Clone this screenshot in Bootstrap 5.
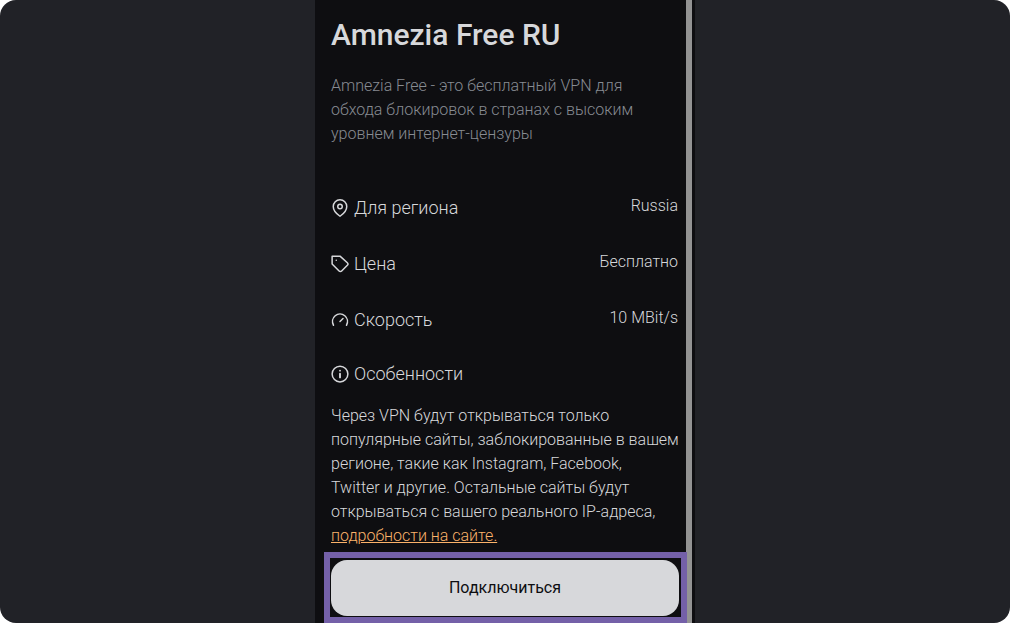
<!DOCTYPE html>
<html lang="ru">
<head>
<meta charset="utf-8">
<meta name="viewport" content="width=device-width, initial-scale=1">
<title>Amnezia Free RU</title>
<link href="https://cdn.jsdelivr.net/npm/bootstrap@5.3.0/dist/css/bootstrap.min.css" rel="stylesheet">
<style>
  body { background: #fff; font-family: Roboto, "Noto Sans", sans-serif; font-size: 16px; line-height: 24px; font-weight: 300; color: #d7d8db; }
  .stage { background: #212227; border-radius: 16px; overflow: hidden; }
  .phone { width: 380px; max-width: 100%; background: #0e0e11; }
  .screen { min-width: 0; }
  .track { width: 6px; margin-right: 3px; background: #939393; }
  h1 { font-size: 30px; line-height: 38px; font-weight: 500; color: #d7d8db; }
  .intro { color: #878b91; }
  .feature { font-size: 18px; line-height: 24px; gap: 5px; padding-top: 2px; }
  .feature-heading { padding: 0 0 2px; }
  .feature svg { width: 18px; height: 18px; fill: none; stroke: #d7d8db; stroke-width: 2; stroke-linecap: round; stroke-linejoin: round; }
  .rows { gap: 30px; }
  .site-link, .site-link:hover { color: #fbb26a; }
  .highlight { border: 6px solid #7460a8; margin: 4px -1px 0 9px; padding: 2px 2px 1px 1px; z-index: 1; }
  .btn-connect { --bs-btn-bg: #d7d8db; --bs-btn-color: #0e0e11; --bs-btn-hover-bg: #c1c2c5; --bs-btn-hover-color: #0e0e11; --bs-btn-border-width: 0; --bs-btn-font-weight: 400; --bs-btn-line-height: 24px; --bs-btn-border-radius: 16px; --bs-btn-padding-y: 16px; }
</style>
</head>
<body>
<div class="stage min-vh-100 d-flex justify-content-center">
  <main class="phone d-flex">
    <div class="screen flex-grow-1 d-flex flex-column">
      <div class="ps-3 pe-2 pt-3">
        <h1 class="mb-0">Amnezia Free RU</h1>
        <p class="intro mt-3 mb-5 pt-1">Amnezia Free - это бесплатный VPN для<br>обхода блокировок в странах с высоким<br>уровнем интернет-цензуры</p>
        <div class="rows d-flex flex-column">
          <div class="d-flex justify-content-between">
            <div class="feature d-flex align-items-center">
              <svg viewBox="0 0 24 24" aria-hidden="true"><path d="M21 10c0 7-9 13-9 13s-9-6-9-13a9 9 0 0 1 18 0z"/><circle cx="12" cy="10" r="3"/></svg>
              <span>Для региона</span>
            </div>
            <span>Russia</span>
          </div>
          <div class="d-flex justify-content-between">
            <div class="feature d-flex align-items-center">
              <svg viewBox="0 0 24 24" aria-hidden="true"><path d="M12 1.500H1.500V12l9.300 9.300c.94.94 2.480.94 3.420 0l7.580-7.580c.94-.94.94-2.480 0-3.420L12 1.500z"/><path d="M7 7h.01"/></svg>
              <span>Цена</span>
            </div>
            <span>Бесплатно</span>
          </div>
          <div class="d-flex justify-content-between">
            <div class="feature d-flex align-items-center">
              <svg viewBox="0 0 24 24" aria-hidden="true"><path d="M12 14l4-4M3.340 19a10 10 0 1 1 17.320 0"/></svg>
              <span>Скорость</span>
            </div>
            <span>10 MBit/s</span>
          </div>
          <div class="feature feature-heading d-flex align-items-center">
            <svg viewBox="0 0 24 24" aria-hidden="true"><circle cx="12" cy="12" r="10.500"/><path stroke-width="2.500" d="M12 16.500v-5M12 7.500h.01"/></svg>
            <span>Особенности</span>
          </div>
        </div>
        <p class="mt-3 mb-0 text-nowrap">Через VPN будут открываться только<br>популярные сайты, заблокированные в вашем<br>регионе, такие как Instagram, Facebook,<br>Twitter и другие. Остальные сайты будут<br>открываться с вашего реального IP-адреса,<br><a class="site-link" href="#">подробности на сайте.</a></p>
      </div>
      <div class="highlight position-relative">
        <button type="button" class="btn btn-connect w-100 d-block">Подключиться</button>
      </div>
    </div>
    <div class="track flex-shrink-0"></div>
  </main>
</div>
<script src="https://cdn.jsdelivr.net/npm/bootstrap@5.3.0/dist/js/bootstrap.bundle.min.js"></script>
</body>
</html>
